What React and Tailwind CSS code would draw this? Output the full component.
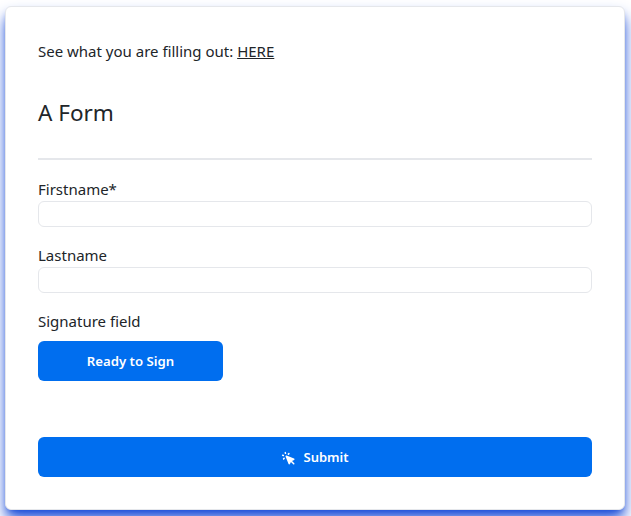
import { HiCursorClick } from "react-icons/hi";

export default function App() {
  return (
    <div className="h-[516px] overflow-hidden bg-white pt-[6px] pl-[5px] pr-[6px] font-['Segoe_UI','Noto_Sans',sans-serif] text-[#212529]">
      <div className="h-[504px] rounded-[6px] border border-[#e5e7eb] bg-white px-[32px] pt-[31px] shadow-[0_10px_15px_-1px_#1d4ed8,0_4px_6px_-4px_#1d4ed8]">
        <p className="text-[15px] leading-[26px]">
          See what you are filling out: <a href="#" className="underline">HERE</a>
        </p>
        <h1 className="mt-[34px] text-[22.5px] leading-[30px]">A Form</h1>
        <hr className="mt-[30px] border-t-2 border-[#e5e7eb]" />
        <form className="mt-[17px]">
          <label className="block text-[15px] leading-[24px]">Firstname*</label>
          <input className="block h-[26px] w-full rounded-[6px] border border-[#e5e7eb] bg-white" />
          <label className="mt-[16px] block text-[15px] leading-[24px]">Lastname</label>
          <input className="block h-[26px] w-full rounded-[6px] border border-[#e5e7eb] bg-white" />
          <label className="mt-[16px] block text-[15px] leading-[24px]">Signature field</label>
          <button type="button" className="mt-[8px] block h-[40px] w-[185px] rounded-[6px] bg-[#006eef] pt-[2px] text-[13.2px] font-semibold text-white">
            Ready to Sign
          </button>
          <button type="button" className="mt-[56px] flex h-[40px] w-full items-center justify-center gap-[7px] rounded-[6px] bg-[#006eef] pt-[2px] text-[13px] font-semibold text-white">
            <HiCursorClick className="h-[15px] w-[15px]" />
            Submit
          </button>
        </form>
      </div>
    </div>
  );
}
